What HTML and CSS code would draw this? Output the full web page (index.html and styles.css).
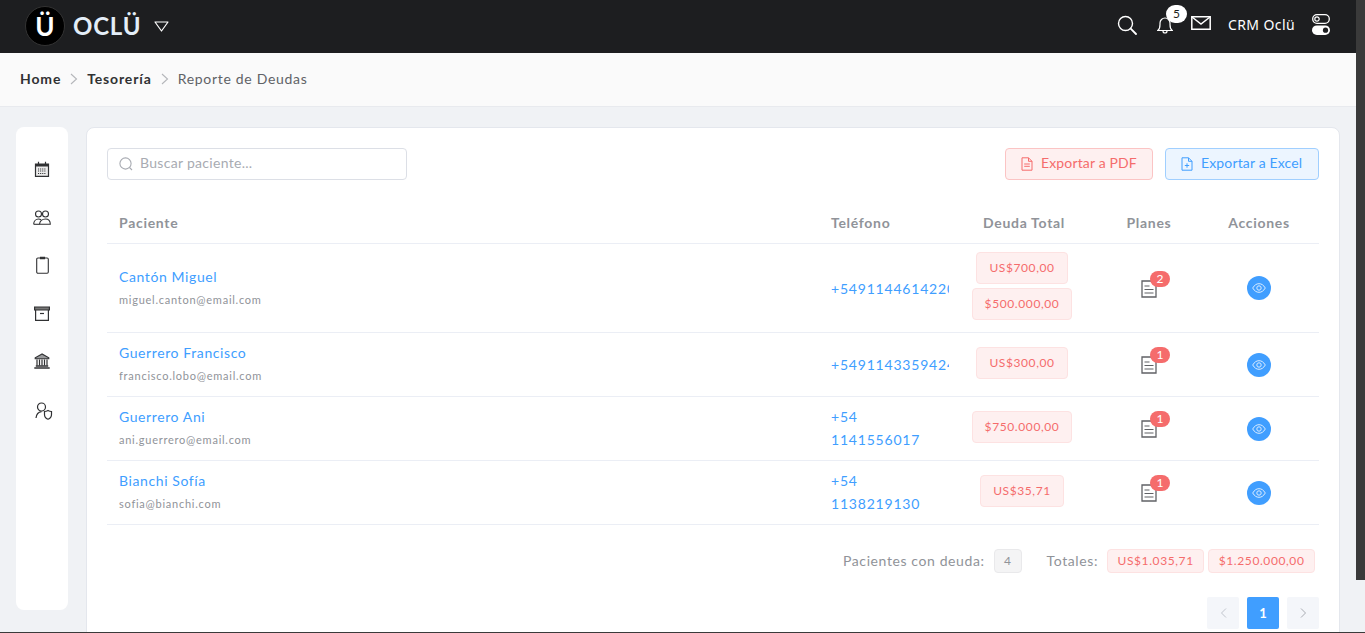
FILE: index.html
```html
<!DOCTYPE html>
<html lang="en">
<head>
    <meta charset="UTF-8">
    <meta name="viewport" content="width=device-width, initial-scale=1.0">
    <title>Reporte de Deudas</title>
    <link rel="stylesheet" href="styles.css">
</head>
<body>
    <svg class="icon-defs" width="0" height="0">
        <symbol id="doc" viewBox="0 0 16 18">
            <path d="M1 1h9.500L15 5.500V17H1z" fill="none" stroke="#606266" stroke-width="1.300"/>
            <path d="M3.500 6h5M3.500 9.500h9M3.500 13h9" fill="none" stroke="#606266" stroke-width="1.200"/>
        </symbol>
        <symbol id="eye" viewBox="0 0 14 10">
            <path d="M.7 5C2.500 2 4.500.7 7 .7S11.500 2 13.300 5C11.500 8 9.500 9.300 7 9.300S2.500 8 .7 5z" fill="none" stroke="#d9ecff"/>
            <circle cx="7" cy="5" r="2.200" fill="none" stroke="#d9ecff"/>
        </symbol>
        <symbol id="sep" viewBox="0 0 8 12">
            <path d="M1 1l5.500 5L1 11" fill="none" stroke="#b4b6ba" stroke-width="1.100"/>
        </symbol>
    </svg>

    <div class="page">
        <header class="topbar">
            <div class="brand">
                <span class="logo">Ü</span>
                <span class="brand-name">OCLÜ</span>
                <svg class="brand-arrow" width="15" height="11" viewBox="0 0 15 11"><path d="M1 1h13L7.500 10z" fill="none" stroke="#fff" stroke-width="1.200" stroke-linejoin="round"/></svg>
            </div>
            <div class="top-actions">
                <svg width="20" height="20" viewBox="0 0 20 20" fill="none" stroke="#fff" stroke-width="1.400"><circle cx="8.500" cy="8.500" r="7"/><path d="M13.700 13.700l5.300 5.300" stroke-linecap="round" stroke-width="1.800"/></svg>
                <div class="bell">
                    <svg width="16" height="18" viewBox="0 0 16 18" fill="none" stroke="#fff" stroke-width="1.200"><path d="M.8 14.500c1.400-1 2.200-2.500 2.200-6V7a5 5 0 0 1 10 0v1.500c0 3.500.8 5 2.200 6z"/><path d="M6 15a2 2 0 0 0 4 0"/></svg>
                    <span class="bell-badge">5</span>
                </div>
                <svg class="top-mail" width="20" height="14" viewBox="0 0 20 14" fill="none" stroke="#fff" stroke-width="1.500"><path d="M.8.800h18.400v12.400H.8z"/><path d="M1 1l9 7 9-7"/></svg>
                <span class="crm-name">CRM Oclü</span>
                <svg width="18" height="21" viewBox="0 0 18 21"><rect x=".7" y=".7" width="16.600" height="8.600" rx="4.300" fill="none" stroke="#fff" stroke-width="1.300"/><circle cx="5" cy="5" r="2.200" fill="none" stroke="#fff" stroke-width="1.200"/><rect y="11.400" width="18" height="9.600" rx="4.800" fill="#fff"/><circle cx="13.500" cy="16.200" r="2.600" fill="#1d1e20"/></svg>
            </div>
        </header>

        <nav class="crumbs">
            <strong>Home</strong>
            <svg class="crumb-sep" width="8" height="12"><use href="#sep"/></svg>
            <strong>Tesorería</strong>
            <svg class="crumb-sep" width="8" height="12"><use href="#sep"/></svg>
            <span class="crumb-last">Reporte de Deudas</span>
        </nav>

        <div class="content">
            <aside class="sidebar">
                <svg width="16" height="16" viewBox="0 0 16 16"><path d="M1.500 3h13v12.300h-13z" fill="#ececec" stroke="#303133" stroke-width="1.200"/><path d="M1 3h14v2.500H1z" fill="#303133"/><path d="M4.500 .8v3M11.500 .8v3" stroke="#303133" stroke-width="1.200"/><path d="M4 8h8M4 10h8M4 12.500h8" stroke="#303133" stroke-width="1.100" stroke-dasharray="1.100 1"/></svg>
                <svg width="18" height="15" viewBox="0 0 18 15" fill="none" stroke="#303133" stroke-width="1.100"><circle cx="5.500" cy="4" r="3"/><circle cx="12.500" cy="4" r="3"/><path d="M.7 14.300c0-3 2-5.300 4.800-5.300 1 0 1.800.3 2.500.8M6.500 14.300c.3-3 2.700-5.300 6-5.300s4.800 2.300 4.800 5.300z"/><path d="M.7 14.300h5.800"/></svg>
                <svg width="13" height="18" viewBox="0 0 13 18" fill="none" stroke="#303133" stroke-width="1.100"><rect x=".7" y="2" width="11.600" height="15.300" rx="1.200"/><path d="M4.500 1.200h4v1.400h-4z" fill="#303133"/></svg>
                <svg width="16" height="15" viewBox="0 0 16 15" fill="none" stroke="#303133" stroke-width="1.200"><path d="M.6 1h14.800v3H.6z" fill="#777"/><path d="M1.600 4v10.400h12.800V4"/><path d="M6 7.500h4"/></svg>
                <svg width="16" height="16" viewBox="0 0 16 16" fill="none" stroke="#303133"><path d="M8 1L1.200 4.800v.9h13.600v-.9z" fill="#9a9b9d" stroke-width="1.100"/><path d="M3 6.500v6M5.500 6.500v6M8 6.500v6M10.500 6.500v6M13 6.500v6" stroke-width="1.200"/><path d="M1.800 13h12.400M.3 15h15.400" stroke-width="1.300"/></svg>
                <svg class="side-last" width="18" height="18" viewBox="0 0 18 18" fill="none" stroke="#303133" stroke-width="1.200"><circle cx="6.500" cy="5" r="4"/><path d="M1 16c.4-3.500 2.400-6 5.500-6.400"/><path d="M9.500 9.500c1.600 0 2.600-.5 3.500-1 .9.500 2 1 3.500 1v3c0 2.500-1.500 4-3.500 4.700-2-.7-3.500-2.200-3.500-4.700z"/></svg>
            </aside>

            <main class="card">
                <div class="toolbar">
                    <div class="search-box">
                        <svg width="14" height="14" viewBox="0 0 14 14" fill="none" stroke="#a8abb2" stroke-width="1.100"><circle cx="6.500" cy="6.500" r="5.600"/><path d="M10.500 10.500l2.500 2.500"/></svg>
                        <span>Buscar paciente...</span>
                    </div>
                    <div class="export-btns">
                        <div class="btn btn-pdf">
                            <svg width="12" height="14" viewBox="0 0 12 14" fill="none" stroke="currentColor"><path d="M1 .8h6.500L11 4.300v8.900H1z"/><path d="M7.500.8v3.500H11M3.200 7h5.600M3.200 9.300h5.600"/></svg>
                            <span>Exportar a PDF</span>
                        </div>
                        <div class="btn btn-excel">
                            <svg width="12" height="14" viewBox="0 0 12 14" fill="none" stroke="currentColor"><path d="M1 .8h6.500L11 4.300v8.900H1z"/><path d="M7.500.8v3.500H11M3.800 8.500h4.400M6 6.300v4.400"/></svg>
                            <span>Exportar a Excel</span>
                        </div>
                    </div>
                </div>

                <div class="table">
                    <div class="row head">
                        <div class="cell">Paciente</div>
                        <div class="cell">Teléfono</div>
                        <div class="cell center">Deuda Total</div>
                        <div class="cell center">Planes</div>
                        <div class="cell center">Acciones</div>
                    </div>

                    <div class="row row-tall">
                        <div class="cell patient"><a class="name">Cantón Miguel</a><span class="mail">miguel.canton@email.com</span></div>
                        <div class="cell phone nowrap">+5491144614220</div>
                        <div class="cell debts"><span class="tag">US$700,00</span><span class="tag">$500.000,00</span></div>
                        <div class="cell center"><div class="plan"><svg width="16" height="18"><use href="#doc"/></svg><span class="plan-badge">2</span></div></div>
                        <div class="cell center"><span class="eye"><svg width="14" height="10"><use href="#eye"/></svg></span></div>
                    </div>

                    <div class="row">
                        <div class="cell patient"><a class="name">Guerrero Francisco</a><span class="mail">francisco.lobo@email.com</span></div>
                        <div class="cell phone nowrap">+5491143359424</div>
                        <div class="cell debts"><span class="tag">US$300,00</span></div>
                        <div class="cell center"><div class="plan"><svg width="16" height="18"><use href="#doc"/></svg><span class="plan-badge">1</span></div></div>
                        <div class="cell center"><span class="eye"><svg width="14" height="10"><use href="#eye"/></svg></span></div>
                    </div>

                    <div class="row">
                        <div class="cell patient"><a class="name">Guerrero Ani</a><span class="mail">ani.guerrero@email.com</span></div>
                        <div class="cell phone wrapped">+54 1141556017</div>
                        <div class="cell debts"><span class="tag">$750.000,00</span></div>
                        <div class="cell center"><div class="plan"><svg width="16" height="18"><use href="#doc"/></svg><span class="plan-badge">1</span></div></div>
                        <div class="cell center"><span class="eye"><svg width="14" height="10"><use href="#eye"/></svg></span></div>
                    </div>

                    <div class="row">
                        <div class="cell patient"><a class="name">Bianchi Sofía</a><span class="mail">sofia@bianchi.com</span></div>
                        <div class="cell phone wrapped">+54 1138219130</div>
                        <div class="cell debts"><span class="tag">US$35,71</span></div>
                        <div class="cell center"><div class="plan"><svg width="16" height="18"><use href="#doc"/></svg><span class="plan-badge">1</span></div></div>
                        <div class="cell center"><span class="eye"><svg width="14" height="10"><use href="#eye"/></svg></span></div>
                    </div>
                </div>

                <div class="totals">
                    <span class="total-label">Pacientes con deuda:</span>
                    <span class="count">4</span>
                    <span class="total-label total-gap">Totales:</span>
                    <span class="tag">US$1.035,71</span>
                    <span class="tag">$1.250.000,00</span>
                </div>

                <div class="pager">
                    <span class="page-btn"><svg width="7" height="10" viewBox="0 0 7 10"><path d="M6 .5L1.500 5 6 9.500" fill="none" stroke="#c0c4cc"/></svg></span>
                    <span class="page-btn active">1</span>
                    <span class="page-btn"><svg width="7" height="10" viewBox="0 0 7 10"><path d="M1 .5L5.500 5 1 9.500" fill="none" stroke="#a8abb2"/></svg></span>
                </div>
            </main>
        </div>
    </div>
    <div class="scrollbar"><div class="thumb"></div></div>
</body>
</html>
```

FILE: styles.css
```css
* {
    box-sizing: border-box;
}

body {
    margin: 0;
    height: 633px;
    display: flex;
    overflow: hidden;
    background-color: #f0f2f5;
    border-bottom: 1px solid #3a3a3a;
    font-family: Lato, "Noto Sans", sans-serif;
    color: #606266;
}

.icon-defs {
    position: absolute;
}

.page {
    flex: 1;
    min-width: 0;
    overflow: hidden;
}

.scrollbar {
    width: 9px;
    flex: none;
}

.thumb {
    height: 580px;
    background-color: #3a3a3a;
}

.topbar {
    height: 53px;
    padding: 0 26px 0 25px;
    display: flex;
    align-items: center;
    justify-content: space-between;
    background-color: #1d1e20;
}

.brand {
    display: flex;
    align-items: center;
    padding-bottom: 1px;
}

.logo {
    width: 40px;
    height: 40px;
    border-radius: 50%;
    background-color: #000;
    border: 1px solid #333;
    color: #fff;
    font-size: 26px;
    font-weight: 700;
    display: flex;
    align-items: center;
    justify-content: center;
}

.brand-name {
    margin-left: 8px;
    padding-bottom: 2px;
    font-size: 24px;
    font-weight: 700;
    letter-spacing: 0.8px;
    color: #e4eef8;
}

.brand-arrow {
    margin-left: 13px;
}

.top-actions {
    display: flex;
    align-items: center;
    padding-bottom: 4px;
}

.bell {
    position: relative;
    margin-left: 20px;
    height: 18px;
}

.bell svg {
    display: block;
}

.bell-badge {
    position: absolute;
    left: 9px;
    top: -11px;
    width: 21px;
    height: 18px;
    border-radius: 10px;
    background-color: #fff;
    color: #1d1e20;
    font-size: 12px;
    text-align: center;
    line-height: 18px;
}

.top-mail {
    margin-left: 18px;
    margin-top: -3px;
}

.crm-name {
    margin: 0 17px;
    font-family: "Noto Sans", sans-serif;
    font-size: 14px;
    letter-spacing: 0.4px;
    color: #fff;
}

.crumbs {
    height: 54px;
    padding: 0 20px 2px;
    display: flex;
    align-items: center;
    background-color: #fafafa;
    border-bottom: 1px solid #e8eaee;
    font-size: 14px;
    letter-spacing: 0.7px;
}

.crumbs strong {
    letter-spacing: 0.85px;
    color: #303133;
}

.crumb-sep {
    margin: 0 9px;
}

.crumb-last {
    color: #606266;
}

.content {
    display: flex;
    align-items: flex-start;
    padding: 20px 16px 0 16px;
    gap: 18px;
}

.sidebar {
    width: 52px;
    height: 483px;
    flex: none;
    padding-top: 18px;
    background-color: #fff;
    border-radius: 8px;
    display: grid;
    grid-auto-rows: 48px;
    align-content: start;
    align-items: center;
    justify-items: center;
}

.side-last {
    margin: 3px 0 0 3px;
}

.card {
    flex: 1;
    min-width: 0;
    height: 520px;
    padding: 20px;
    background-color: #fff;
    border: 1px solid #e4e7ed;
    border-radius: 8px;
}

.toolbar {
    display: flex;
    justify-content: space-between;
    height: 32px;
}

.search-box {
    width: 300px;
    height: 32px;
    padding: 0 11px;
    display: flex;
    align-items: center;
    gap: 7px;
    border: 1px solid #dcdfe6;
    border-radius: 4px;
    font-size: 14px;
    letter-spacing: 0.3px;
    color: #a8abb2;
}

.search-box span {
    padding-bottom: 4px;
}

.export-btns {
    display: flex;
    gap: 12px;
}

.btn {
    height: 32px;
    padding: 0 15px;
    display: flex;
    align-items: center;
    gap: 8px;
    border-radius: 4px;
    font-size: 14px;
    letter-spacing: 0.15px;
    white-space: nowrap;
}

.btn svg {
    flex: none;
}

.btn span {
    padding-bottom: 4px;
}

.btn-pdf {
    width: 148px;
    color: #f56c6c;
    background-color: #fef0f0;
    border: 1px solid #fbc4c4;
}

.btn-excel {
    width: 154px;
    color: #409eff;
    background-color: #ecf5ff;
    border: 1px solid #a0cfff;
}

.table {
    margin-top: 23px;
}

.row {
    display: grid;
    grid-template-columns: 1fr 130px 150px 100px 120px;
    height: 64px;
    align-items: center;
    border-bottom: 1px solid #ebeef5;
}

.row.head {
    height: 41px;
    padding-bottom: 2px;
    font-size: 14px;
    font-weight: 700;
    letter-spacing: 0.7px;
    color: #909399;
}

.row.row-tall {
    height: 89px;
}

.cell {
    padding: 0 12px;
}

.center {
    text-align: center;
}

.patient {
    padding-bottom: 2px;
}

.row-tall .patient {
    padding-bottom: 0;
}

.name {
    display: block;
    font-size: 14px;
    letter-spacing: 0.6px;
    line-height: 23px;
    color: #409eff;
}

.mail {
    display: block;
    font-size: 11px;
    letter-spacing: 0.75px;
    line-height: 23px;
    color: #909399;
}

.phone {
    overflow: hidden;
    font-size: 14px;
    letter-spacing: 0.8px;
    line-height: 23px;
    color: #409eff;
}

.nowrap {
    white-space: nowrap;
}

.wrapped {
    padding-bottom: 2px;
}

.debts {
    display: flex;
    flex-direction: column;
    align-items: center;
    gap: 4px;
    padding-right: 16px;
    padding-bottom: 4px;
}

.tag {
    display: inline-block;
    height: 32px;
    padding: 0 12px;
    background-color: #fef0f0;
    border: 1px solid #fde2e2;
    border-radius: 4px;
    font-size: 12px;
    letter-spacing: 0.6px;
    line-height: 30px;
    color: #f56c6c;
}

.plan {
    position: relative;
    display: inline-block;
    height: 18px;
    margin-top: 4px;
}

.plan svg {
    display: block;
}

.plan-badge {
    position: absolute;
    left: 9px;
    top: -9px;
    width: 20px;
    height: 16px;
    border-radius: 10px;
    background-color: #f56c6c;
    color: #fff;
    font-size: 12px;
    text-align: center;
    line-height: 16px;
}

.eye {
    width: 24px;
    height: 24px;
    border-radius: 50%;
    background-color: #409eff;
    display: inline-flex;
    align-items: center;
    justify-content: center;
    vertical-align: middle;
}

.totals {
    margin-top: 24px;
    padding-right: 4px;
    display: flex;
    justify-content: flex-end;
    align-items: center;
    gap: 4px;
}

.totals .tag {
    height: 24px;
    padding: 0 9.500px;
    line-height: 22px;
}

.total-label {
    padding-bottom: 2px;
    font-size: 14px;
    letter-spacing: 0.6px;
    color: #909399;
    margin-right: 5px;
}

.total-gap {
    margin-left: 21px;
}

.count {
    width: 28px;
    height: 24px;
    background-color: #f4f4f5;
    border: 1px solid #e9e9eb;
    border-radius: 4px;
    font-size: 12px;
    line-height: 22px;
    text-align: center;
    color: #909399;
}

.pager {
    margin-top: 24px;
    display: flex;
    justify-content: flex-end;
    gap: 8px;
}

.page-btn {
    width: 32px;
    height: 32px;
    display: flex;
    align-items: center;
    justify-content: center;
    background-color: #f4f6fa;
    border-radius: 2px;
    font-size: 13px;
    font-weight: 700;
}

.page-btn.active {
    background-color: #409eff;
    color: #fff;
}
```
